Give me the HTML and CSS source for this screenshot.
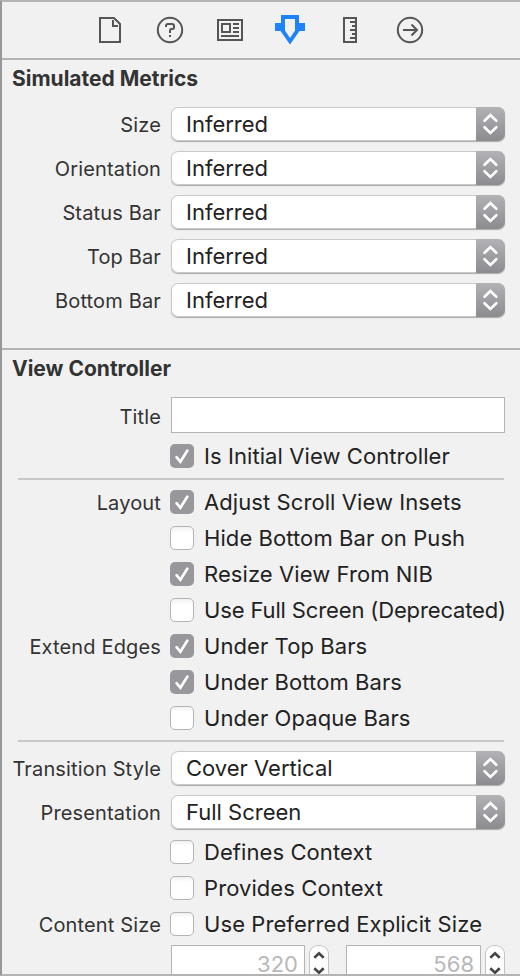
FILE: index.html
```html
<!DOCTYPE html>
<html lang="en">
<head>
<meta charset="utf-8">
<title>Attributes Inspector</title>
<link rel="stylesheet" href="styles.css">
</head>
<body>
<svg class="defs" aria-hidden="true">
  <symbol id="arrows" viewBox="0 0 29 34"><path d="M8.500 13.800 14.400 8l5.900 5.800M8.500 20.200l5.900 5.800 5.900-5.800"/></symbol>
  <symbol id="check" viewBox="0 0 24 24"><path d="m6.500 13.200 3.900 4.500L17.400 6.500"/></symbol>
  <symbol id="step" viewBox="0 0 20 36"><path d="m5.300 12.700 4.700-4.400 4.700 4.400M5.300 23.300l4.700 4.400 4.700-4.400"/></symbol>
</svg>
<main class="inspector">
  <nav class="tabs">
    <svg class="icon" viewBox="0 0 30 30"><path d="M5 3h14l6 6v18H5zM18 5v6h5"/></svg>
    <svg class="icon" viewBox="0 0 30 30"><circle cx="15" cy="15" r="12.200"/><path d="M11 12v-1q0-2 2-2h4q2 0 2 2v1.500q0 1.500-2 1.500h-1q-1 0-1 1.500V18M15 20v2"/></svg>
    <svg class="icon" viewBox="0 0 30 30"><path d="M3 5h24v20H3zM7 9h8v8H7zM18 9h6M18 13h6M18 17h6M6 21h18"/></svg>
    <svg class="icon active" viewBox="0 0 30 30"><path class="fill" d="M0 8h6V0h18v8h6v8h-5.500L15 29.500 5.500 16H0z"/><path class="hole" d="M10 4h10v11.500L15 23l-5-7.500z"/></svg>
    <svg class="icon" viewBox="0 0 30 30"><path d="M9 3h12v24H9zM15 7h5M17 11h3M15 15h5M17 19h3M15 23h5"/></svg>
    <svg class="icon" viewBox="0 0 30 30"><circle cx="15" cy="15" r="12.200"/><path d="M8 15h13M16.500 9.500 22 15l-5.500 5.500"/></svg>
  </nav>

  <section class="section metrics">
    <h2>Simulated Metrics</h2>
    <div class="row"><label>Size</label><div class="select"><span>Inferred</span><svg class="arrows"><use href="#arrows"/></svg></div></div>
    <div class="row"><label>Orientation</label><div class="select"><span>Inferred</span><svg class="arrows"><use href="#arrows"/></svg></div></div>
    <div class="row"><label>Status Bar</label><div class="select"><span>Inferred</span><svg class="arrows"><use href="#arrows"/></svg></div></div>
    <div class="row"><label>Top Bar</label><div class="select"><span>Inferred</span><svg class="arrows"><use href="#arrows"/></svg></div></div>
    <div class="row"><label>Bottom Bar</label><div class="select"><span>Inferred</span><svg class="arrows"><use href="#arrows"/></svg></div></div>
  </section>

  <section class="section controller">
    <h2>View Controller</h2>
    <div class="row title-row"><label>Title</label><div class="field"></div></div>
    <div class="row option"><label></label><i class="box on"><svg><use href="#check"/></svg></i><span>Is Initial View Controller</span></div>
    <hr>
    <div class="row option"><label>Layout</label><i class="box on"><svg><use href="#check"/></svg></i><span>Adjust Scroll View Insets</span></div>
    <div class="row option"><label></label><i class="box"></i><span>Hide Bottom Bar on Push</span></div>
    <div class="row option"><label></label><i class="box on"><svg><use href="#check"/></svg></i><span>Resize View From NIB</span></div>
    <div class="row option"><label></label><i class="box"></i><span class="tight">Use Full Screen (Deprecated)</span></div>
    <div class="row option"><label>Extend Edges</label><i class="box on"><svg><use href="#check"/></svg></i><span>Under Top Bars</span></div>
    <div class="row option"><label></label><i class="box on"><svg><use href="#check"/></svg></i><span>Under Bottom Bars</span></div>
    <div class="row option"><label></label><i class="box"></i><span>Under Opaque Bars</span></div>
    <hr>
    <div class="row"><label>Transition Style</label><div class="select"><span>Cover Vertical</span><svg class="arrows"><use href="#arrows"/></svg></div></div>
    <div class="row"><label>Presentation</label><div class="select"><span>Full Screen</span><svg class="arrows"><use href="#arrows"/></svg></div></div>
    <div class="row option"><label></label><i class="box"></i><span>Defines Context</span></div>
    <div class="row option"><label></label><i class="box"></i><span>Provides Context</span></div>
    <div class="row option"><label>Content Size</label><i class="box"></i><span>Use Preferred Explicit Size</span></div>
    <div class="sizes">
      <div class="field number">320</div><svg class="stepper"><use href="#step"/></svg>
      <div class="field number tall">568</div><svg class="stepper"><use href="#step"/></svg>
    </div>
  </section>
</main>
</body>
</html>
```
FILE: styles.css
```css
* { box-sizing: border-box; }
body {
  margin: 0;
  font-family: Inter, "Liberation Sans", sans-serif;
  color: #222;
  background: #f1f1f1;
}
.defs { display: none; }
.inspector {
  display: flex;
  flex-direction: column;
  width: 520px;
  height: 976px;
  overflow: hidden;
  border: 2px solid #b3b3b3;
  border-left-color: #999;
  border-right: 0;
}
.tabs {
  display: flex;
  flex: none;
  gap: 30px;
  height: 58px;
  padding: 13px 0 0 93px;
  border-bottom: 2px solid #b3b3b3;
}
.icon { width: 30px; height: 30px; fill: none; stroke: #555; stroke-width: 2; }
.icon .fill { fill: #1e82fa; stroke: none; }
.icon .hole { fill: #f1f1f1; stroke: none; }
.section { flex: none; padding-right: 13px; }
.metrics { height: 290px; border-bottom: 2px solid #b3b3b3; }
.controller { flex: 1; min-height: 0; overflow: hidden; }
h2 {
  height: 38px;
  margin: 0 0 4px 10px;
  font-size: 21px;
  font-weight: 700;
  line-height: 38px;
  color: #333;
}
.row { display: flex; align-items: center; height: 44px; white-space: nowrap; }
.row label {
  flex: none;
  width: 159px;
  margin-right: 10px;
  padding-top: 2px;
  text-align: right;
  font-size: 20px;
  line-height: 26px;
  letter-spacing: 0.15px;
  color: #333;
}
.select {
  display: flex;
  align-items: center;
  justify-content: space-between;
  width: 334px;
  height: 34px;
  padding-left: 15px;
  overflow: hidden;
  border-radius: 7px;
  background: #fff;
  box-shadow: 0 0 0 1px #c9c9c9 inset, 0 1px 1px #aaa;
  font-size: 22px;
}
.arrows {
  width: 29px;
  height: 34px;
  fill: none;
  stroke: #fff;
  stroke-width: 2.6;
  stroke-linecap: round;
  background: linear-gradient(#b2b2b6, #8c8b90);
}
.title-row { height: 46px; }
.title-row label { padding-top: 4px; }
.field { width: 334px; height: 36px; border: 1px solid #b4b4b4; background: #fff; }
.option { height: 36px; font-size: 22px; letter-spacing: 0.08px; }
.option label { margin-right: 9px; }
.tight { letter-spacing: -0.14px; }
.box {
  flex: none;
  width: 24px;
  height: 24px;
  margin-right: 10px;
  border: 1px solid #b5b5b5;
  border-radius: 5px;
  background: linear-gradient(#f0f0f0, #fff 5px);
}
.box.on { border: 0; background: #98979c; }
.box svg { display: block; width: 24px; height: 24px; fill: none; stroke: #fff; stroke-width: 2.6; stroke-linecap: round; }
hr { height: 2px; margin: 4px 3px 4px 16px; border: 0; background: #c8c8c8; }
.sizes { display: flex; margin: 3px 0 0 169px; }
.number { width: 134px; padding-right: 6px; text-align: right; font-size: 22px; line-height: 36px; color: #b8b8b8; }
.tall { width: 135px; margin-left: 17px; }
.stepper {
  width: 20px;
  height: 36px;
  margin-left: 4px;
  border-radius: 9px;
  background: #fff;
  box-shadow: 0 0 0 1px #c4c4c4 inset;
  fill: none;
  stroke: #444;
  stroke-width: 2.6;
}
```
